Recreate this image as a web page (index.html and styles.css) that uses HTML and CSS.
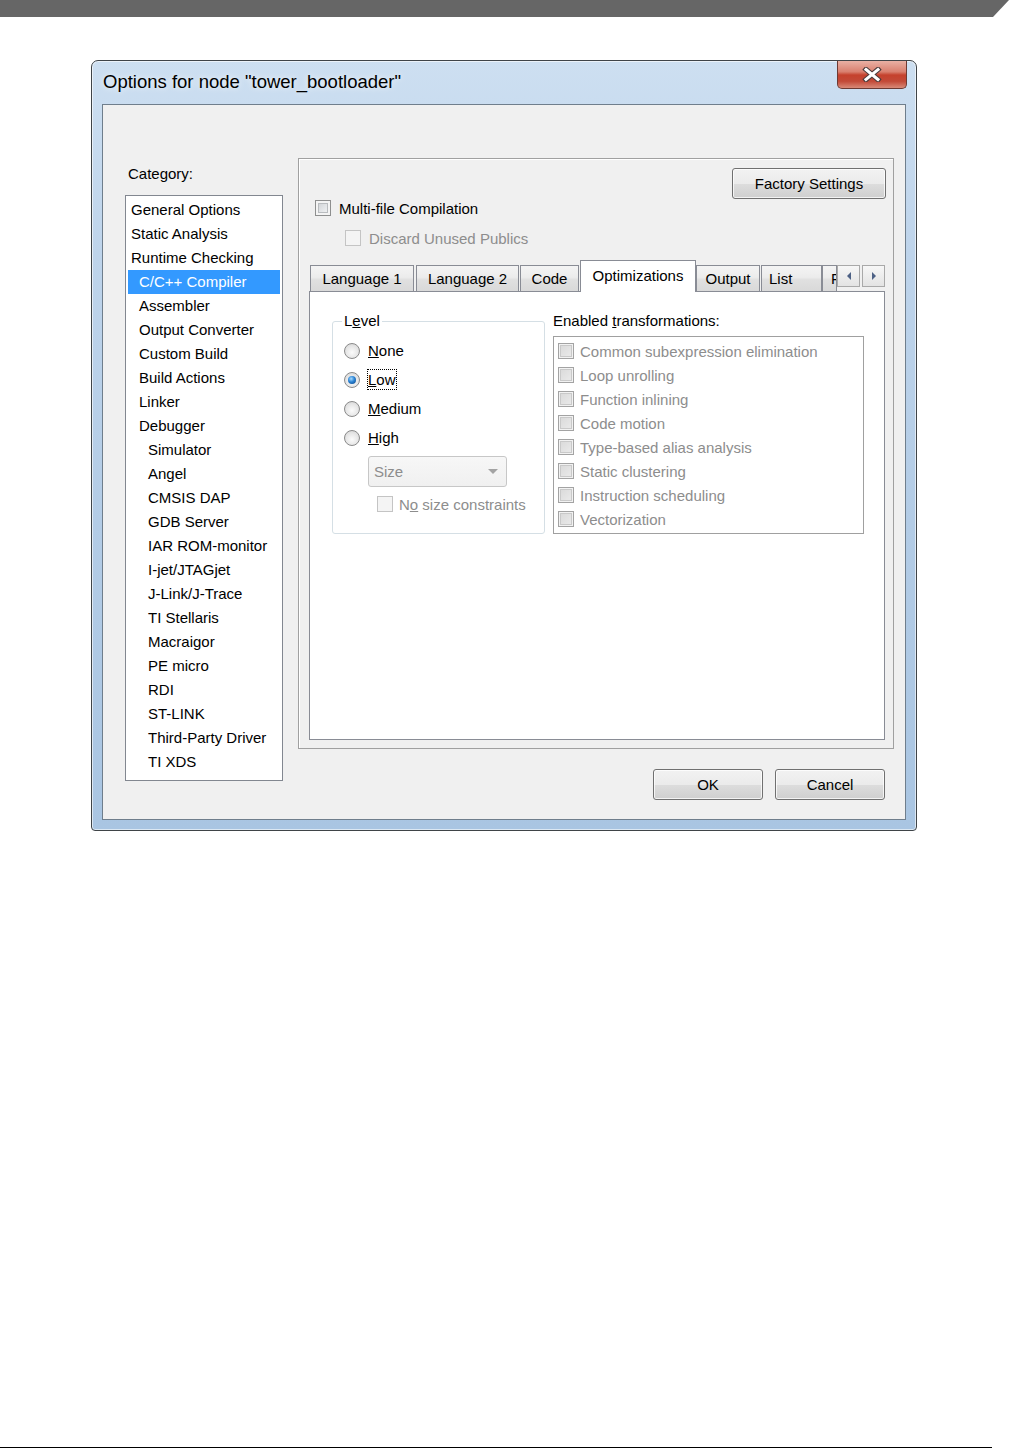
FILE: index.html
```html
<!DOCTYPE html>
<html lang="en">
<head>
    <meta charset="UTF-8">
    <title>Options for node "tower_bootloader"</title>
    <link rel="stylesheet" href="styles.css">
</head>
<body>
    <div class="topbar"></div>

    <div class="window">
        <div class="titlebar">
            <span class="title">Options for node "tower_bootloader"</span>
            <div class="close">
                <svg width="22" height="15" viewBox="0 0 22 15">
                    <path d="M5 2.5 L17 12.5 M17 2.5 L5 12.5" stroke="#4b3b3b" stroke-width="5.2" stroke-linecap="square" fill="none"/>
                    <path d="M5 2.5 L17 12.5 M17 2.5 L5 12.5" stroke="#fff" stroke-width="3" stroke-linecap="square" fill="none"/>
                </svg>
            </div>
        </div>

        <div class="client">
            <div class="side">
                <div class="cat-label">Category:</div>
                <ul class="cat-list">
                    <li>General Options</li>
                    <li>Static Analysis</li>
                    <li>Runtime Checking</li>
                    <li class="lvl2 sel">C/C++ Compiler</li>
                    <li class="lvl2">Assembler</li>
                    <li class="lvl2">Output Converter</li>
                    <li class="lvl2">Custom Build</li>
                    <li class="lvl2">Build Actions</li>
                    <li class="lvl2">Linker</li>
                    <li class="lvl2">Debugger</li>
                    <li class="lvl3">Simulator</li>
                    <li class="lvl3">Angel</li>
                    <li class="lvl3">CMSIS DAP</li>
                    <li class="lvl3">GDB Server</li>
                    <li class="lvl3">IAR ROM-monitor</li>
                    <li class="lvl3">I-jet/JTAGjet</li>
                    <li class="lvl3">J-Link/J-Trace</li>
                    <li class="lvl3">TI Stellaris</li>
                    <li class="lvl3">Macraigor</li>
                    <li class="lvl3">PE micro</li>
                    <li class="lvl3">RDI</li>
                    <li class="lvl3">ST-LINK</li>
                    <li class="lvl3">Third-Party Driver</li>
                    <li class="lvl3">TI XDS</li>
                </ul>
            </div>

            <div class="main">
                <div class="group">
                    <div class="group-top">
                        <button class="btn factory">Factory Settings</button>
                    </div>
                    <div class="check-row row-multi">
                        <span class="box"></span>
                        <span class="check-text">Multi-file Compilation</span>
                    </div>
                    <div class="check-row row-discard disabled">
                        <span class="box"></span>
                        <span class="check-text">Discard Unused Publics</span>
                    </div>

                    <div class="tabs">
                        <div class="tab t-lang1">Language 1</div>
                        <div class="tab t-lang2">Language 2</div>
                        <div class="tab t-code">Code</div>
                        <div class="tab active t-opt">Optimizations</div>
                        <div class="tab t-out">Output</div>
                        <div class="tab t-list">List</div>
                        <div class="tab t-more">F</div>
                        <div class="tab-arrows">
                            <span class="arrow"><svg width="6" height="8" viewBox="0 0 6 8"><path d="M5 0 L1 4 L5 8 Z" fill="#4d6185"/></svg></span>
                            <span class="arrow"><svg width="6" height="8" viewBox="0 0 6 8"><path d="M1 0 L5 4 L1 8 Z" fill="#4d6185"/></svg></span>
                        </div>
                    </div>

                    <div class="tab-page">
                        <fieldset class="level">
                            <legend>L<u>e</u>vel</legend>
                            <div class="radio-row">
                                <span class="radio"></span>
                                <span class="radio-text"><u>N</u>one</span>
                            </div>
                            <div class="radio-row">
                                <span class="radio on"></span>
                                <span class="radio-text focus"><u>L</u>ow</span>
                            </div>
                            <div class="radio-row">
                                <span class="radio"></span>
                                <span class="radio-text"><u>M</u>edium</span>
                            </div>
                            <div class="radio-row">
                                <span class="radio"></span>
                                <span class="radio-text"><u>H</u>igh</span>
                            </div>
                            <div class="combo">
                                <span>Size</span>
                                <svg width="10" height="6" viewBox="0 0 10 6"><path d="M0 0 L10 0 L5 5 Z" fill="#a3a3a3"/></svg>
                            </div>
                            <div class="check-row row-nosize disabled">
                                <span class="box"></span>
                                <span class="check-text">N<u>o</u> size constraints</span>
                            </div>
                        </fieldset>

                        <div class="transforms">
                            <div class="trans-label">Enabled <u>t</u>ransformations:</div>
                            <div class="trans-list">
                                <div class="trans-item"><span class="box grey"></span>Common subexpression elimination</div>
                                <div class="trans-item"><span class="box grey"></span>Loop unrolling</div>
                                <div class="trans-item"><span class="box grey"></span>Function inlining</div>
                                <div class="trans-item"><span class="box grey"></span>Code motion</div>
                                <div class="trans-item"><span class="box grey"></span>Type-based alias analysis</div>
                                <div class="trans-item"><span class="box grey"></span>Static clustering</div>
                                <div class="trans-item"><span class="box grey"></span>Instruction scheduling</div>
                                <div class="trans-item"><span class="box grey"></span>Vectorization</div>
                            </div>
                        </div>
                    </div>
                </div>

                <div class="buttons">
                    <button class="btn ok">OK</button>
                    <button class="btn cancel">Cancel</button>
                </div>
            </div>
        </div>
    </div>

    <div class="footer-line"></div>
</body>
</html>
```

FILE: styles.css
```css
body {
    margin: 0;
    background-color: #fff;
    font-family: "Liberation Sans", Arial, sans-serif;
    font-size: 15px;
    color: #000;
}

.topbar {
    height: 17px;
    background-color: #666;
    clip-path: polygon(0 0, 100% 0, 993px 100%, 0 100%);
}

.window {
    box-sizing: border-box;
    width: 826px;
    height: 771px;
    margin: 43px 0 0 91px;
    padding: 0 10px 10px;
    border: 1px solid #3f4448;
    border-radius: 7px 7px 4px 4px;
    background: linear-gradient(180deg, #cddff1 0%, #bed4eb 25%, #b3cce6 60%, #a9c5e2 100%);
    box-shadow: inset 0 0 0 1px rgba(255,255,255,0.6);
}

.titlebar {
    height: 43px;
    display: flex;
    justify-content: space-between;
    align-items: flex-start;
}

.title {
    font-size: 18.5px;
    line-height: 20px;
    padding: 11px 0 0 1px;
    text-shadow: 0 0 6px rgba(255,255,255,0.9);
}

.close {
    box-sizing: border-box;
    width: 70px;
    height: 28px;
    margin-right: -1px;
    border: 1px solid #6d3a33;
    border-top: none;
    border-radius: 0 0 5px 5px;
    background: linear-gradient(180deg, #e9b0a4 0%, #d9806f 40%, #c5412d 52%, #c24a38 75%, #d98a78 100%);
    display: flex;
    align-items: center;
    justify-content: center;
}

.client {
    box-sizing: border-box;
    width: 804px;
    height: 716px;
    border: 1px solid #6f7e8c;
    background-color: #f0f0f0;
    display: flex;
    padding: 53px 0 0 22px;
}

.side {
    width: 158px;
    margin-right: 15px;
}

.cat-label {
    line-height: 20px;
    padding: 6px 0 0 3px;
    margin-bottom: 11px;
}

.cat-list {
    list-style: none;
    box-sizing: border-box;
    height: 586px;
    margin: 0;
    padding: 2px;
    border: 1px solid #828790;
    background-color: #fff;
}

.cat-list li {
    height: 24px;
    line-height: 24px;
    padding-left: 3px;
    white-space: nowrap;
}

.cat-list li.lvl2 {
    padding-left: 11px;
}

.cat-list li.lvl3 {
    padding-left: 20px;
}

.cat-list li.sel {
    background-color: #3399ff;
    color: #fff;
}

.main {
    width: 596px;
}

.group {
    box-sizing: border-box;
    height: 591px;
    padding: 9px 8px 0 10px;
    border: 1px solid #a0a0a0;
    box-shadow: inset 1px 1px 0 #fff;
}

.group-top {
    display: flex;
    justify-content: flex-end;
}

.btn {
    box-sizing: border-box;
    height: 31px;
    padding: 0;
    border: 1px solid #707070;
    border-radius: 3px;
    background: linear-gradient(180deg, #f2f2f2 0%, #ebebeb 50%, #dddddd 51%, #cfcfcf 100%);
    box-shadow: inset 0 0 0 1px rgba(255,255,255,0.75);
    font-family: "Liberation Sans", Arial, sans-serif;
    font-size: 15px;
    color: #000;
}

.factory {
    width: 154px;
    margin-right: -1px;
}

.check-row {
    display: flex;
    align-items: center;
    height: 18px;
}

.row-multi {
    margin-left: 6px;
}

.row-discard {
    margin-top: 12px;
    margin-left: 36px;
}

.box {
    box-sizing: border-box;
    width: 16px;
    height: 16px;
    flex: none;
    border: 1px solid #8e8f8f;
    background: linear-gradient(135deg, #c9ccd0 0%, #e6e8ea 60%, #f6f6f6 100%);
    box-shadow: inset 0 0 0 2px #f4f4f4, inset 0 0 0 3px #b9bcbf;
}

.check-text {
    margin-left: 8px;
}

.disabled {
    color: #8d8d8d;
}

.disabled .box {
    border-color: #c4c4c4;
    background: #f4f4f4;
    box-shadow: none;
}

.tabs {
    display: flex;
    align-items: flex-end;
    height: 31px;
    margin-top: 13px;
    padding-left: 1px;
}

.tab {
    box-sizing: border-box;
    height: 26px;
    line-height: 25px;
    text-align: center;
    border: 1px solid #898c95;
    border-bottom: none;
    background: linear-gradient(180deg, #f4f4f4 0%, #ececec 45%, #e0e0e0 55%, #d9d9d9 100%);
    white-space: nowrap;
}

.tab.active {
    position: relative;
    z-index: 1;
    height: 32px;
    line-height: 30px;
    margin-bottom: -1px;
    background: #fff;
}

.t-lang1 { width: 104px; margin-right: 2px; }
.t-lang2 { width: 103px; margin-right: 1px; }
.t-code { width: 59px; margin-right: 1px; }
.t-opt { width: 116px; }
.t-out { width: 64px; margin-right: 1px; }
.t-list { width: 61px; text-align: left; padding-left: 7px; }

.t-more {
    width: 15px;
    overflow: hidden;
    text-align: left;
    padding-left: 8px;
}

.tab-arrows {
    display: flex;
    gap: 2px;
    margin-bottom: 4px;
}

.arrow {
    box-sizing: border-box;
    width: 23px;
    height: 22px;
    border: 1px solid #a9a9a9;
    background: linear-gradient(180deg, #f7f7f7, #e3e3e3);
    display: flex;
    align-items: center;
    justify-content: center;
}

.tab-page {
    box-sizing: border-box;
    height: 449px;
    border: 1px solid #898c95;
    background-color: #fff;
    display: flex;
    align-items: flex-start;
    padding: 19px 0 0 22px;
}

.level {
    box-sizing: border-box;
    width: 213px;
    margin: 0;
    padding: 5px 0 20px 11px;
    border: 1px solid #d5dfe5;
    border-radius: 3px;
}

.level legend {
    margin-left: -2px;
    padding: 0 2px;
    line-height: 20px;
}

.radio-row {
    display: flex;
    align-items: center;
    height: 29px;
}

.radio {
    box-sizing: border-box;
    width: 16px;
    height: 16px;
    border-radius: 50%;
    border: 1px solid #8a8a8a;
    background: radial-gradient(circle at 50% 60%, #fbfbfb 0%, #e6e6e6 55%, #cfcfcf 100%);
    display: flex;
    align-items: center;
    justify-content: center;
}

.radio.on::after {
    content: "";
    width: 8px;
    height: 8px;
    border-radius: 50%;
    background: radial-gradient(circle at 40% 35%, #a8dcff 0%, #2b83d4 45%, #0c417f 100%);
}

.radio-text {
    margin-left: 8px;
    line-height: 19px;
}

.radio-text.focus {
    outline: 1px dotted #000;
}

.combo {
    box-sizing: border-box;
    width: 139px;
    height: 31px;
    margin: 4px 0 0 24px;
    padding: 0 8px 0 5px;
    border: 1px solid #c7c7c7;
    border-radius: 3px;
    background: linear-gradient(180deg, #f7f7f7, #f0f0f0);
    color: #8d8d8d;
    display: flex;
    align-items: center;
    justify-content: space-between;
}

.row-nosize {
    margin: 8px 0 0 33px;
}

.row-nosize .check-text {
    margin-left: 6px;
}

.transforms {
    margin-left: 8px;
    width: 311px;
}

.trans-label {
    line-height: 20px;
    margin-bottom: 5px;
}

.trans-list {
    box-sizing: border-box;
    height: 198px;
    padding: 2px 0 0 4px;
    border: 1px solid #a0a0a0;
    background-color: #fff;
}

.trans-item {
    display: flex;
    align-items: center;
    height: 24px;
    color: #8d8d8d;
    white-space: nowrap;
}

.trans-item .box {
    margin-right: 6px;
    border-color: #a3a3a3;
    background: linear-gradient(135deg, #d8d8d8 0%, #ececec 100%);
    box-shadow: inset 0 0 0 1px #f2f2f2, inset 0 0 0 2px #c9c9c9;
}

.buttons {
    display: flex;
    justify-content: flex-end;
    gap: 12px;
    margin-top: 20px;
    padding-right: 9px;
}

.ok,
.cancel {
    width: 110px;
}

.footer-line {
    width: 992px;
    height: 1px;
    margin-top: 616px;
    background-color: #000;
}
```
